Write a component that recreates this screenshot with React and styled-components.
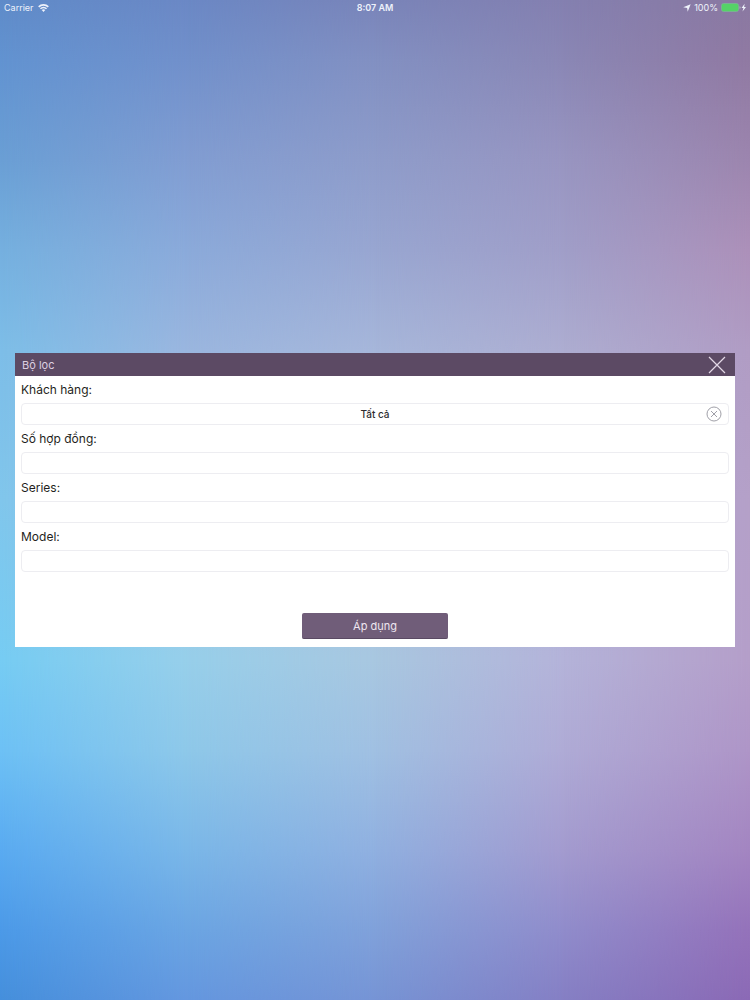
import React, { useState } from "react"
import styled, { createGlobalStyle } from "styled-components"

const GlobalStyle = createGlobalStyle`
  *, *::before, *::after {
    box-sizing: border-box;
  }
  body {
    margin: 0;
    font-family: Inter, "Noto Sans", "Liberation Sans", sans-serif;
  }
  button, input {
    font-family: inherit;
  }
`

const Screen = styled.div`
  display: grid;
  grid-template-columns: minmax(0, 1fr);
  min-height: 100vh;

  > * {
    grid-area: 1 / 1;
  }
`

// Each column is a vertical gradient that fades in over the previous one
const stops = [0, 6, 16, 25, 35, 50, 66, 75, 85, 93, 100]
const columns = [
  "#5f8bc9 #6293d1 #6a9fd5 #75b0df #7dbee8 #80c6ec #76ccf3 #6dc1f5 #5aabf1 #4c9ae8 #458fdc",
  "#6b88c5 #7190cb #819dd2 #8baada #9ab6df #9cc4e4 #97cfea #8ec8e9 #7ab7e8 #6ba5e3 #6497df",
  "#7984b9 #8290c2 #8e9cca #98a6d1 #a6b6da #aabedc #a8c7e0 #a0c0e2 #90b0e0 #80a1da #7694d5",
  "#8480b0 #8a87b5 #9895c1 #a09ec8 #adadd1 #b0aed4 #b4b3d9 #afabd6 #a39bcf #908ccb #857fc4",
  "#8a78a1 #9079a2 #9c85ae #ac90b9 #b09cc4 #b4a0c8 #b49ec9 #ae95c7 #a385c1 #9472ba #8b69b5",
].map(colors =>
  colors
    .split(" ")
    .map((color, i) => `${color} ${stops[i]}%`)
    .join(", ")
)

const Wallpaper = styled.div`
  background: linear-gradient(${props => columns[props.$column]});
  ${props =>
    props.$column > 0 &&
    `mask-image: linear-gradient(
      to right,
      transparent ${(props.$column - 1) * 25}%,
      #000 ${props.$column * 25}%
    );`}
`

const StatusBar = styled.header`
  z-index: 1;
  align-self: start;
  display: grid;
  grid-template-columns: 1fr auto 1fr;
  align-items: center;
  height: 15px;
  padding: 0 4px;
  color: #eef2fb;
  font-size: 9px;
  line-height: 15px;
`

const StatusGroup = styled.div`
  display: flex;
  align-items: center;
  justify-content: ${props => (props.$end ? "flex-end" : "flex-start")};
  gap: ${props => (props.$end ? "3px" : "4px")};
`

const Time = styled.time`
  font-weight: 600;
`

const Main = styled.main`
  z-index: 1;
  display: grid;
  grid-template-columns: minmax(0, 1fr);
  align-content: center;
  padding: 0 15px;
`

const Dialog = styled.section`
  background: #fff;
`

const TitleBar = styled.div`
  display: flex;
  align-items: center;
  justify-content: space-between;
  height: 23px;
  padding: 0 8px 0 7px;
  background: #5c4a64;
`

const Title = styled.h1`
  margin: 0;
  color: #dccfe0;
  font-size: 11px;
  font-weight: 400;
`

const IconButton = styled.button`
  display: flex;
  padding: 0;
  border: 0;
  background: none;
  color: ${props => props.$color};
  cursor: pointer;
`

const Form = styled.form`
  display: flex;
  flex-direction: column;
  padding: 0 6px 8px;
`

const Label = styled.label`
  height: 27px;
  color: #1f1f21;
  font-size: 12px;
  line-height: 27px;
`

const Field = styled.div`
  display: flex;
  align-items: center;
  height: 22px;
  padding: 0 ${props => (props.$clearable ? "6px" : "0")};
  border: 1px solid #ededf1;
  border-radius: 4px;
`

const Input = styled.input`
  flex: 1;
  min-width: 0;
  height: 20px;
  padding: 0 4px;
  border: 0;
  outline: none;
  background: none;
  color: #2c2c2e;
  font-size: 10px;
  ${props =>
    props.$centered &&
    `
    padding: 0 0 0 16px;
    font-weight: 500;
    text-align: center;
  `}
`

const ApplyButton = styled.button`
  align-self: center;
  width: 146px;
  height: 26px;
  margin-top: 41px;
  padding: 0;
  border: 0;
  border-bottom: 1px solid #5a4a63;
  border-radius: 2px;
  background: #705d79;
  color: #eee6f0;
  font-size: 11px;
  cursor: pointer;
`

const WifiIcon = () => (
  <svg width="11" height="8" viewBox="0 0 22 16" fill="none" aria-hidden="true">
    <path
      d="M1.4 5.8a13.6 13.6 0 0 1 19.2 0M4.9 9.4a8.6 8.6 0 0 1 12.2 0"
      stroke="currentColor"
      strokeWidth="3.2"
    />
    <path d="M11 15.8l-3.6-3.6a5.1 5.1 0 0 1 7.2 0z" fill="currentColor" />
  </svg>
)

const LocationIcon = () => (
  <svg width="8" height="8" viewBox="0 0 14 14" aria-hidden="true">
    <path d="M13.4.6L8.2 13.6 7.2 6.8.4 5.8z" fill="currentColor" />
  </svg>
)

const BatteryIcon = () => (
  <svg width="25" height="9" viewBox="0 0 25 9" aria-hidden="true">
    <rect x=".5" y=".5" width="17" height="8" rx="2" fill="#55d267" stroke="#7fb89c" strokeWidth=".6" />
    <path d="M18.6 3.2q1 .3 1 1.3t-1 1.3z" fill="#b9c8c4" />
    <path d="M23.6.8l-3 4.2h1.8l-.9 3.4L25 4h-1.9z" fill="currentColor" />
  </svg>
)

const CloseIcon = () => (
  <svg width="20" height="18" viewBox="0 0 20 18" fill="none" aria-hidden="true">
    <path d="M2 1l16 16M18 1L2 17" stroke="currentColor" strokeWidth="1.2" />
  </svg>
)

const ClearIcon = () => (
  <svg width="16" height="16" viewBox="0 0 16 16" fill="none" aria-hidden="true">
    <circle cx="8" cy="8" r="7" stroke="currentColor" />
    <path d="M5 5l6 6M11 5l-6 6" stroke="currentColor" />
  </svg>
)

const TextField = ({ id, label }) => (
  <>
    <Label htmlFor={id}>{label}</Label>
    <Field>
      <Input id={id} type="text" />
    </Field>
  </>
)

const App = () => {
  const [customer, setCustomer] = useState("Tất cả")

  return (
    <Screen>
      <GlobalStyle />
      {columns.map((_, i) => (
        <Wallpaper key={i} $column={i} />
      ))}
      <StatusBar>
        <StatusGroup>
          Carrier
          <WifiIcon />
        </StatusGroup>
        <Time>8:07 AM</Time>
        <StatusGroup $end>
          <LocationIcon />
          <span>100%</span>
          <BatteryIcon />
        </StatusGroup>
      </StatusBar>
      <Main>
        <Dialog aria-labelledby="filter-title">
          <TitleBar>
            <Title id="filter-title">Bộ lọc</Title>
            <IconButton type="button" $color="#e3d8e6" aria-label="Đóng">
              <CloseIcon />
            </IconButton>
          </TitleBar>
          <Form onSubmit={e => e.preventDefault()}>
            <Label htmlFor="customer">Khách hàng:</Label>
            <Field $clearable>
              <Input
                id="customer"
                type="text"
                $centered
                value={customer}
                onChange={e => setCustomer(e.target.value)}
              />
              <IconButton
                type="button"
                $color="#a0a0a8"
                aria-label="Xóa"
                onClick={() => setCustomer("")}
              >
                <ClearIcon />
              </IconButton>
            </Field>
            <TextField id="contract" label="Số hợp đồng:" />
            <TextField id="series" label="Series:" />
            <TextField id="model" label="Model:" />
            <ApplyButton type="submit">Áp dụng</ApplyButton>
          </Form>
        </Dialog>
      </Main>
    </Screen>
  )
}

export default App
